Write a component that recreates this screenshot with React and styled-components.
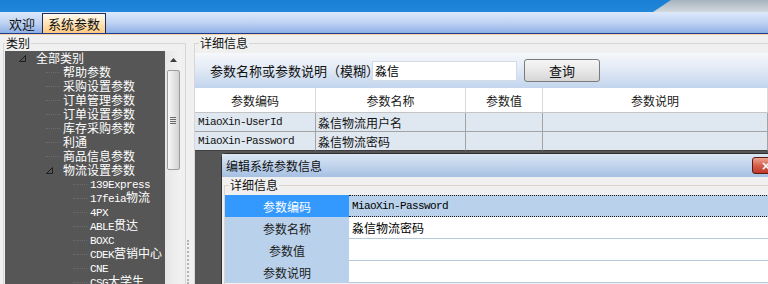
import React from 'react'
import styled, { createGlobalStyle } from 'styled-components'

const GlobalStyle = createGlobalStyle`
  html, body { margin: 0; padding: 0; }
  body {
    width: 768px;
    height: 284px;
    overflow: hidden;
    background: #f0f0f0;
    font-family: "Noto Sans CJK SC", "Liberation Sans", sans-serif;
    font-size: 12px;
    color: #000;
  }
`

const Latin = styled.span`
  font-family: "Liberation Mono", monospace;
  font-size: 11px;
  letter-spacing: -0.6px;
`

// split a label into ascii / cjk runs so latin gets the narrow mono face
const Mixed = ({ text }) =>
  text
    .split(/([\x00-\x7f]+)/)
    .filter(Boolean)
    .map((part, i) =>
      /^[\x00-\x7f]+$/.test(part) ? <Latin key={i}>{part}</Latin> : <React.Fragment key={i}>{part}</React.Fragment>
    )

const Screen = styled.div`
  position: relative;
  width: 768px;
  height: 284px;
  display: flex;
  flex-direction: column;
  overflow: hidden;
`

// ---------- header ----------
const Banner = styled.div`
  height: 12px;
  flex-shrink: 0;
  display: flex;
  justify-content: flex-end;
  background: linear-gradient(#1a7fd4, #2187da);
`
const BannerCap = styled.div`
  width: 115px;
  background: linear-gradient(#a7b3bd, #d2d9df);
  clip-path: polygon(18px 0, 100% 0, 100% 100%, 0 100%);
`
const TabBar = styled.div`
  height: 21px;
  flex-shrink: 0;
  display: flex;
  align-items: flex-end;
  gap: 1px;
  padding-left: 3px;
  background: linear-gradient(#dde9fa, #bcd1f2 55%, #8eafe8);
  border-bottom: 1px solid #1b3a8a;
`
const Tab = styled.div`
  height: 19px;
  display: flex;
  align-items: center;
  padding: 0 ${p => (p.$active ? 5 : 6)}px;
  font-size: 13px;
  color: #111;
  ${p =>
    p.$active &&
    `
    background: linear-gradient(#fffaf0, #ffe4b8 50%, #ffc880);
    border: 1px solid #1c2b5c;
    border-bottom: none;
  `}
`

// ---------- body ----------
const Body = styled.div`
  flex: 1;
  min-height: 0;
  display: flex;
  padding-left: 3px;
  border-top: 1px solid #fad3a2;
`
const Group = styled.fieldset`
  margin: 0;
  padding: ${p => p.$pad || '0'};
  min-width: 0;
  box-sizing: border-box;
  border: 1px solid ${p => p.$line || '#d6d6d6'};
  border-bottom: none;
  ${p => p.$open && 'border-right: none;'}
  display: flex;
  flex-direction: column;
  width: ${p => p.$width || 'auto'};
  flex: ${p => (p.$width ? 'none' : '1')};
`
const Legend = styled.legend`
  padding: 0 1px;
  margin-left: ${p => p.$indent || 0}px;
  font-size: 12px;
  line-height: 16px;
  color: #111;
`

// ---------- tree ----------
const TreeArea = styled.div`
  flex: 1;
  min-height: 0;
  display: flex;
`
const Tree = styled.div`
  width: 160px;
  background: #565656;
  color: #fff;
  overflow: hidden;
`
const TreeRow = styled.div`
  height: 14px;
  display: flex;
  align-items: center;
  padding-left: ${p => 14 + p.$level * 27}px;
  white-space: nowrap;
  line-height: 14px;
`
const Slot = styled.span`
  width: 14px;
  margin-right: 3px;
  flex-shrink: 0;
  display: flex;
  align-items: center;
`
const Connector = styled.span`
  width: 14px;
  margin-right: 3px;
  flex-shrink: 0;
  border-top: 1px dotted #6c6c6c;
`
const VScroll = styled.div`
  width: 16px;
  background: linear-gradient(to right, #e6e6e6, #f2f2f2);
  display: flex;
  flex-direction: column;
  align-items: center;
`
const ArrowUp = styled.div`
  height: 17px;
  display: flex;
  align-items: center;
  justify-content: center;
`
const Thumb = styled.div`
  width: 13px;
  height: 100px;
  margin-top: 2px;
  box-sizing: border-box;
  border: 1px solid #9c9c9c;
  border-radius: 2px;
  background: linear-gradient(to right, #f7f7f7, #e2e2e2 60%, #d2d2d2);
  display: flex;
  flex-direction: column;
  align-items: center;
  justify-content: center;
  gap: 1px;
`
const GripLine = styled.span`
  width: 6px;
  height: 1px;
  background: #6a6a6a;
`
const Splitter = styled.div`
  width: 8px;
  flex-shrink: 0;
  display: flex;
  flex-direction: column;
  padding-top: 205px;
  box-sizing: border-box;
`
const SplitGrip = styled.div`
  flex: 1;
  margin-left: 1px;
  border-left: 2px dotted #b4b4b4;
`

// ---------- right side ----------
const SearchBar = styled.div`
  height: 35px;
  margin-top: 2px;
  flex-shrink: 0;
  display: flex;
  align-items: center;
  padding-left: 15px;
  background: linear-gradient(#f6f8fb, #e2eaf5 45%, #c2d5ed);
`
const SearchLabel = styled.span`
  width: 162px;
  font-size: 13px;
  color: #111;
  white-space: nowrap;
`
const SearchInput = styled.input`
  width: 145px;
  height: 20px;
  box-sizing: border-box;
  border: 1px solid #d3dbe6;
  background: #fff;
  padding: 0 2px;
  font-family: "Noto Sans CJK SC", sans-serif;
  font-size: 12px;
  outline: none;
`
const QueryButton = styled.button`
  width: 76px;
  height: 23px;
  margin-left: 7px;
  border: 1px solid #7a7a7a;
  border-radius: 3px;
  background: linear-gradient(#f6f6f6, #e8e8e8 50%, #d6d6d6);
  font-family: "Noto Sans CJK SC", sans-serif;
  font-size: 13px;
  color: #111;
  padding: 0;
`
const Grid = styled.div`
  display: grid;
  grid-template-columns: 121px 150px 77px 1fr;
  flex-shrink: 0;
`
const HeadCell = styled.div`
  height: 24px;
  display: flex;
  align-items: center;
  justify-content: center;
  background: #fff;
  border-right: 1px solid #dadada;
  border-bottom: 1px solid #c4c4c4;
  color: #1a1a1a;
`
const Cell = styled.div`
  height: 18px;
  display: flex;
  align-items: center;
  padding-left: ${p => p.$pad || 2}px;
  background: #dfe7f0;
  border-right: 1px solid #a4a4a4;
  border-bottom: 1px solid ${p => (p.$last ? '#404040' : '#a4a4a4')};
  white-space: nowrap;
  color: #111;
`
const Empty = styled.div`
  flex: 1;
  background: #565656;
`

// ---------- dialog ----------
const Dialog = styled.div`
  position: absolute;
  left: 221px;
  top: 153px;
  width: 567px;
  height: 150px;
  box-sizing: border-box;
  border: 1px solid #303030;
  border-radius: 4px 4px 0 0;
  background: #f0f0f0;
  display: flex;
  flex-direction: column;
`
const TitleBar = styled.div`
  height: 23px;
  flex-shrink: 0;
  display: flex;
  align-items: center;
  padding-left: 4px;
  background: linear-gradient(#dbe6f4, #c1d4ec 50%, #a6c0e2);
  color: #111;
`
const CloseBtn = styled.div`
  margin-left: auto;
  margin-right: 7px;
  width: 28px;
  height: 17px;
  box-sizing: border-box;
  border: 1px solid #5a1c12;
  border-radius: 3px;
  background: linear-gradient(#eba593, #d5604a 50%, #c0392b);
  color: #fff;
  font-family: "DejaVu Sans", sans-serif;
  font-weight: bold;
  font-size: 12px;
  display: flex;
  align-items: center;
  justify-content: center;
`
const DialogBody = styled.div`
  flex: 1;
  display: flex;
  padding: 0 0 0 2px;
`
const PropGrid = styled.div`
  display: grid;
  grid-template-columns: 124px 1fr;
  margin-top: 2px;
`
const PropName = styled.div`
  height: 22px;
  display: flex;
  align-items: center;
  justify-content: center;
  background: ${p => (p.$selected ? '#3399ff' : '#b9d1ea')};
  color: ${p => (p.$selected ? '#fff' : '#1c1c1c')};
`
const PropValue = styled.div`
  height: 22px;
  box-sizing: border-box;
  display: flex;
  align-items: center;
  padding-left: 3px;
  white-space: nowrap;
  background: ${p => (p.$focus ? '#b9d1ea' : '#fff')};
  border-bottom: 1px ${p => (p.$focus ? 'dotted #1a1a1a' : 'solid #b6cade')};
  ${p => p.$focus && 'border-top: 1px dotted #1a1a1a;'}
`

const treeItems = [
  { t: '全部类别', l: 0, open: true },
  { t: '帮助参数', l: 1 },
  { t: '采购设置参数', l: 1 },
  { t: '订单管理参数', l: 1 },
  { t: '订单设置参数', l: 1 },
  { t: '库存采购参数', l: 1 },
  { t: '利通', l: 1 },
  { t: '商品信息参数', l: 1 },
  { t: '物流设置参数', l: 1, open: true },
  { t: '139Express', l: 2 },
  { t: '17feia物流', l: 2 },
  { t: '4PX', l: 2 },
  { t: 'ABLE贯达', l: 2 },
  { t: 'BOXC', l: 2 },
  { t: 'CDEK营销中心', l: 2 },
  { t: 'CNE', l: 2 },
  { t: 'CSG大学生', l: 2 },
]

const rows = [
  { code: 'MiaoXin-UserId', name: '淼信物流用户名' },
  { code: 'MiaoXin-Password', name: '淼信物流密码' },
]

const props = [
  { name: '参数编码', value: 'MiaoXin-Password' },
  { name: '参数名称', value: '淼信物流密码' },
  { name: '参数值', value: '' },
  { name: '参数说明', value: '' },
]

const Expanded = () => (
  <svg width="7" height="7" viewBox="0 0 7 7">
    <path d="M6.5 0.5 L0.5 6.5 H6.5 Z" fill="none" stroke="#1e1e1e" strokeWidth="1" />
  </svg>
)

const App = () => {
  return (
    <Screen>
      <GlobalStyle />
      <Banner>
        <BannerCap />
      </Banner>
      <TabBar>
        <Tab>欢迎</Tab>
        <Tab $active>系统参数</Tab>
      </TabBar>

      <Body>
        {/* category tree */}
        <Group $width="183px" $pad="0 1px">
          <Legend>类别</Legend>
          <TreeArea>
            <Tree>
              {treeItems.map((item, i) => (
                <TreeRow key={i} $level={item.l}>
                  {item.open ? (
                    <Slot>
                      <Expanded />
                    </Slot>
                  ) : (
                    <Connector />
                  )}
                  <span>
                    <Mixed text={item.t} />
                  </span>
                </TreeRow>
              ))}
            </Tree>
            <VScroll>
              <ArrowUp>
                <svg width="7" height="4" viewBox="0 0 7 4">
                  <path d="M0 4 L3.5 0 L7 4 Z" fill="#3c3c3c" />
                </svg>
              </ArrowUp>
              <Thumb>
                <GripLine />
                <GripLine />
                <GripLine />
                <GripLine />
              </Thumb>
            </VScroll>
          </TreeArea>
        </Group>

        <Splitter>
          <SplitGrip />
        </Splitter>

        {/* detail */}
        <Group $open>
          <Legend $indent={4}>详细信息</Legend>
          <SearchBar>
            <SearchLabel>参数名称或参数说明（模糊）</SearchLabel>
            <SearchInput defaultValue="淼信" />
            <QueryButton>查询</QueryButton>
          </SearchBar>
          <Grid>
            <HeadCell>参数编码</HeadCell>
            <HeadCell>参数名称</HeadCell>
            <HeadCell>参数值</HeadCell>
            <HeadCell>参数说明</HeadCell>
            {rows.map((r, i) => (
              <React.Fragment key={r.code}>
                <Cell $pad={3} $last={i === rows.length - 1}>
                  <Mixed text={r.code} />
                </Cell>
                <Cell $last={i === rows.length - 1}>{r.name}</Cell>
                <Cell $last={i === rows.length - 1} />
                <Cell $last={i === rows.length - 1} />
              </React.Fragment>
            ))}
          </Grid>
          <Empty />
        </Group>
      </Body>

      {/* modal edit window */}
      <Dialog>
        <TitleBar>
          编辑系统参数信息
          <CloseBtn>×</CloseBtn>
        </TitleBar>
        <DialogBody>
          <Group $open $line="#ddd6c8">
            <Legend $indent={4}>详细信息</Legend>
            <PropGrid>
              {props.map((p, i) => (
                <React.Fragment key={p.name}>
                  <PropName $selected={i === 0}>{p.name}</PropName>
                  <PropValue $focus={i === 0}>
                    <Mixed text={p.value} />
                  </PropValue>
                </React.Fragment>
              ))}
            </PropGrid>
          </Group>
        </DialogBody>
      </Dialog>
    </Screen>
  )
}

export default App
